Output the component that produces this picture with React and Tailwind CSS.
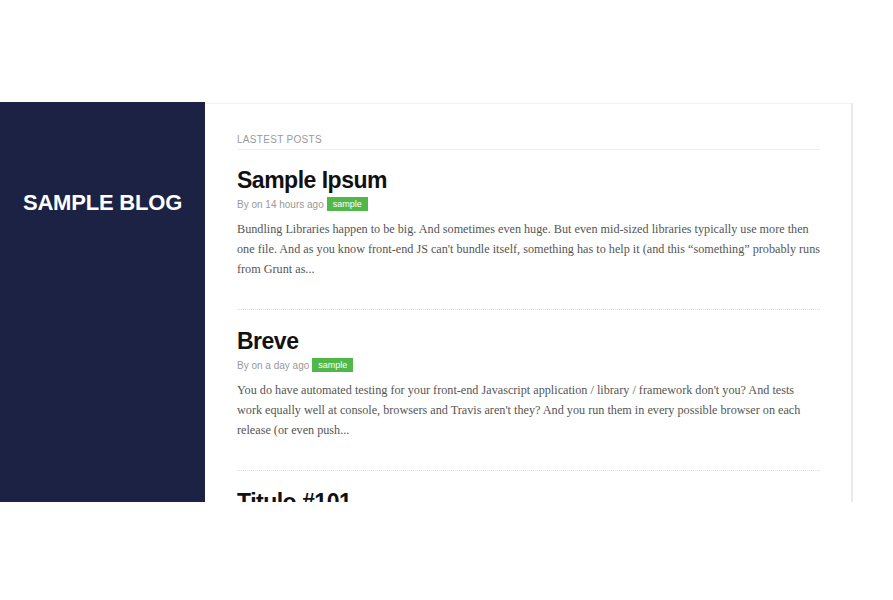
export default function App() {
  const posts = [
    {
      title: "Sample Ipsum",
      meta: "By on 14 hours ago",
      lines: [
        "Bundling Libraries happen to be big. And sometimes even huge. But even mid-sized libraries typically use more then",
        "one file. And as you know front-end JS can't bundle itself, something has to help it (and this \u201csomething\u201d probably runs",
        "from Grunt as...",
      ],
    },
    {
      title: "Breve",
      meta: "By on a day ago",
      lines: [
        "You do have automated testing for your front-end Javascript application / library / framework don't you? And tests",
        "work equally well at console, browsers and Travis aren't they? And you run them in every possible browser on each",
        "release (or even push...",
      ],
    },
  ];
  const sans = { fontFamily: '"Liberation Sans", Arial, sans-serif' };
  return (
    <div className="w-[893px] h-[600px] bg-white pt-[102px]">
      <div className="flex h-[400px] w-[853px]">
        <div className="w-[205px] shrink-0 bg-[#1b2244] flex justify-center pt-[87px]">
          <h1
            className="text-white font-bold text-[22px] tracking-[-0.2px] leading-[28px] h-[28px]"
            style={sans}
          >
            SAMPLE BLOG
          </h1>
        </div>
        <div className="flex-1 border-t border-t-[#f1f1f1] border-r-2 border-r-[#e9e9e9] mt-[1px] overflow-hidden pl-[32px] pr-[31px] pt-[30px]">
          <div
            className="text-[10px] leading-[12px] tracking-[0.3px] text-[#9a9a9a] pb-[3px] border-b border-b-[#eeeeee]"
            style={sans}
          >
            LASTEST POSTS
          </div>
          <div className="pt-[18px]">
            {posts.map((p, i) => (
              <div key={i} className="pb-[19px] mb-[19px] border-b border-dotted border-b-[#dddddd]">
                <h2
                  className="text-[23px] leading-[24px] font-bold text-[#111] tracking-[-0.5px]"
                  style={sans}
                >
                  {p.title}
                </h2>
                <div
                  className="mt-[5px] flex items-center gap-[3px] h-[14px] text-[10px] text-[#999]"
                  style={sans}
                >
                  <span>{p.meta}</span>
                  <span className="bg-[#52b749] text-white text-[9px] leading-[14px] h-[14px] px-[6px]">sample</span>
                </div>
                <p
                  className="mt-[8px] text-[12.2px] leading-[20px] text-[#555] pb-[11px]"
                  style={{ fontFamily: '"Liberation Serif", Georgia, serif' }}
                >
                  {p.lines.map((l, j) => (
                    <span key={j} className="block whitespace-nowrap">
                      {l}
                    </span>
                  ))}
                </p>
              </div>
            ))}
            <h2
              className="text-[23px] leading-[24px] font-bold text-[#111] tracking-[-0.5px]"
              style={sans}
            >
              Titulo #101
            </h2>
          </div>
        </div>
      </div>
    </div>
  );
}
